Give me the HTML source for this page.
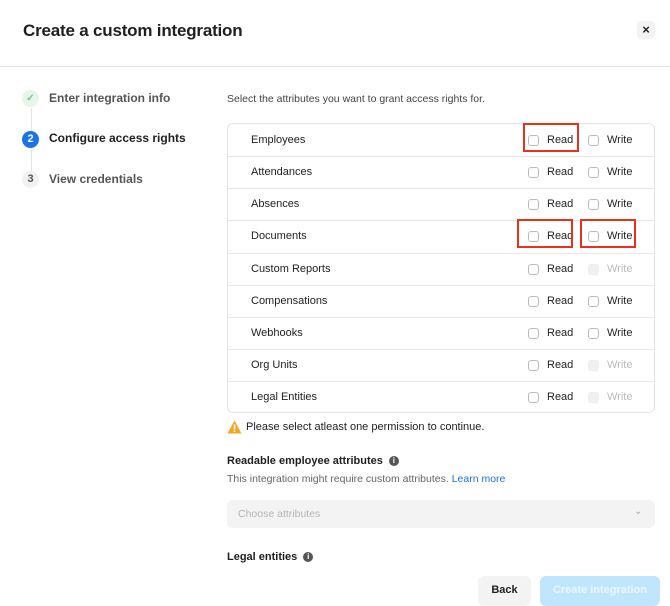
<!DOCTYPE html><html><head><style>
body{margin:0;width:670px;height:603px;overflow:hidden;background:#fff;font-family:"Liberation Sans",sans-serif;color:#1f1f1f;position:relative}
.a{position:absolute}
h1{position:absolute;left:23px;top:21px;margin:0;font-size:17px;font-weight:bold;letter-spacing:-0.2px}
.x{left:637px;top:21px;width:18px;height:18px;background:#f3f3f3;border-radius:4px;font-size:13px;text-align:center;line-height:18px;font-weight:bold}
.hr{left:0;top:66px;width:670px;height:1px;background:#e4e4e4}
.st{font-size:12px;font-weight:bold;color:#555}
.c{width:17px;height:17px;border-radius:50%;font-size:11px;text-align:center;line-height:17px;font-weight:bold}
.tbl{left:227px;top:123px;width:426px;height:288px;border:1px solid #e3e3e3;border-radius:6px}
.row{position:absolute;left:0;width:426px;height:32px;border-bottom:1px solid #e8e8e8;font-size:11px}
.row span{position:absolute;top:10px}
.cb{position:absolute;top:11px;width:9px;height:9px;border:1px solid #bbb;border-radius:3px}
.red{position:absolute;border:2px solid #e8321f;box-sizing:border-box}
.i{display:inline-block;vertical-align:1px;margin-left:6px;width:10px;height:10px;border-radius:50%;background:#555;color:#fff;font-size:8px;text-align:center;line-height:10px;font-weight:bold}
</style></head><body>
<h1>Create a custom integration</h1>
<div class="a x">×</div>
<div class="a hr"></div>
<div class="a" style="left:31px;top:108px;width:1px;height:72px;background:#e5e5e5"></div>
<div class="a c" style="left:22px;top:90px;background:#e6f6ea;color:#6cc684;font-size:10px">✓</div>
<div class="a st" style="left:49px;top:91px">Enter integration info</div>
<div class="a c" style="left:22px;top:131px;background:#1a73e8;color:#fff">2</div>
<div class="a st" style="left:49px;top:131px;color:#1f1f1f">Configure access rights</div>
<div class="a c" style="left:22px;top:171px;background:#f1f1f1;color:#555">3</div>
<div class="a st" style="left:49px;top:172px">View credentials</div>
<div class="a" style="left:227px;top:93px;font-size:10.5px;color:#444">Select the attributes you want to grant access rights for.</div>
<div class="a tbl">
<div class="row" style="top:0"><span style="left:23px">Employees</span><i class="cb" style="left:300px"></i><span style="left:319px">Read</span><i class="cb" style="left:360px"></i><span style="left:379px">Write</span></div>
<div class="row" style="top:32px"><span style="left:23px">Attendances</span><i class="cb" style="left:300px"></i><span style="left:319px">Read</span><i class="cb" style="left:360px"></i><span style="left:379px">Write</span></div>
<div class="row" style="top:64px"><span style="left:23px">Absences</span><i class="cb" style="left:300px"></i><span style="left:319px">Read</span><i class="cb" style="left:360px"></i><span style="left:379px">Write</span></div>
<div class="row" style="top:96px;height:33px"><span style="left:23px">Documents</span><i class="cb" style="left:300px"></i><span style="left:319px">Read</span><i class="cb" style="left:360px"></i><span style="left:379px">Write</span></div>
<div class="row" style="top:129px"><span style="left:23px">Custom Reports</span><i class="cb" style="left:300px"></i><span style="left:319px">Read</span><i class="cb" style="left:360px;background:#f0f0f0;border-color:#eee"></i><span style="left:379px;color:#bbb">Write</span></div>
<div class="row" style="top:161px"><span style="left:23px">Compensations</span><i class="cb" style="left:300px"></i><span style="left:319px">Read</span><i class="cb" style="left:360px"></i><span style="left:379px">Write</span></div>
<div class="row" style="top:193px"><span style="left:23px">Webhooks</span><i class="cb" style="left:300px"></i><span style="left:319px">Read</span><i class="cb" style="left:360px"></i><span style="left:379px">Write</span></div>
<div class="row" style="top:225px"><span style="left:23px">Org Units</span><i class="cb" style="left:300px"></i><span style="left:319px">Read</span><i class="cb" style="left:360px;background:#f0f0f0;border-color:#eee"></i><span style="left:379px;color:#bbb">Write</span></div>
<div class="row" style="top:257px;border-bottom:none"><span style="left:23px">Legal Entities</span><i class="cb" style="left:300px"></i><span style="left:319px">Read</span><i class="cb" style="left:360px;background:#f0f0f0;border-color:#eee"></i><span style="left:379px;color:#bbb">Write</span></div>
</div>
<div class="red" style="left:523px;top:123px;width:56px;height:29px"></div>
<div class="red" style="left:517px;top:219px;width:56px;height:29px"></div>
<div class="red" style="left:580px;top:219px;width:56px;height:29px"></div>
<svg class="a" style="left:227px;top:420px" width="15" height="14" viewBox="0 0 15 14"><path d="M7.5 0.5L14.5 13.5H0.5Z" fill="#f5a623"/><rect x="6.7" y="4.5" width="1.6" height="5" fill="#fff"/><rect x="6.7" y="10.5" width="1.6" height="1.6" fill="#fff"/></svg>
<div class="a" style="left:246px;top:421px;font-size:11px">Please select atleast one permission to continue.</div>
<div class="a" style="left:227px;top:455px;font-size:11px;font-weight:bold">Readable employee attributes<span class="i">i</span></div>
<div class="a" style="left:227px;top:473px;font-size:10.5px;color:#666">This integration might require custom attributes. <span style="color:#1a73e8">Learn more</span></div>
<div class="a" style="left:227px;top:500px;width:428px;height:28px;background:#f3f3f3;border-radius:6px"></div>
<div class="a" style="left:238px;top:508px;font-size:10.5px;color:#b5b5b5">Choose attributes</div>
<div class="a" style="left:634px;top:506px;font-size:10px;color:#aaa">⌄</div>
<div class="a" style="left:227px;top:551px;font-size:11px;font-weight:bold">Legal entities<span class="i">i</span></div>
<div class="a" style="left:478px;top:576px;width:53px;height:30px;background:#f3f3f3;border-radius:6px;text-align:center;line-height:28px;font-size:11px;font-weight:bold">Back</div>
<div class="a" style="left:540px;top:576px;width:120px;height:30px;background:#bfe6fd;border-radius:6px;text-align:center;line-height:28px;font-size:11px;font-weight:bold;color:#eaf7ff">Create integration</div>
</body></html>
